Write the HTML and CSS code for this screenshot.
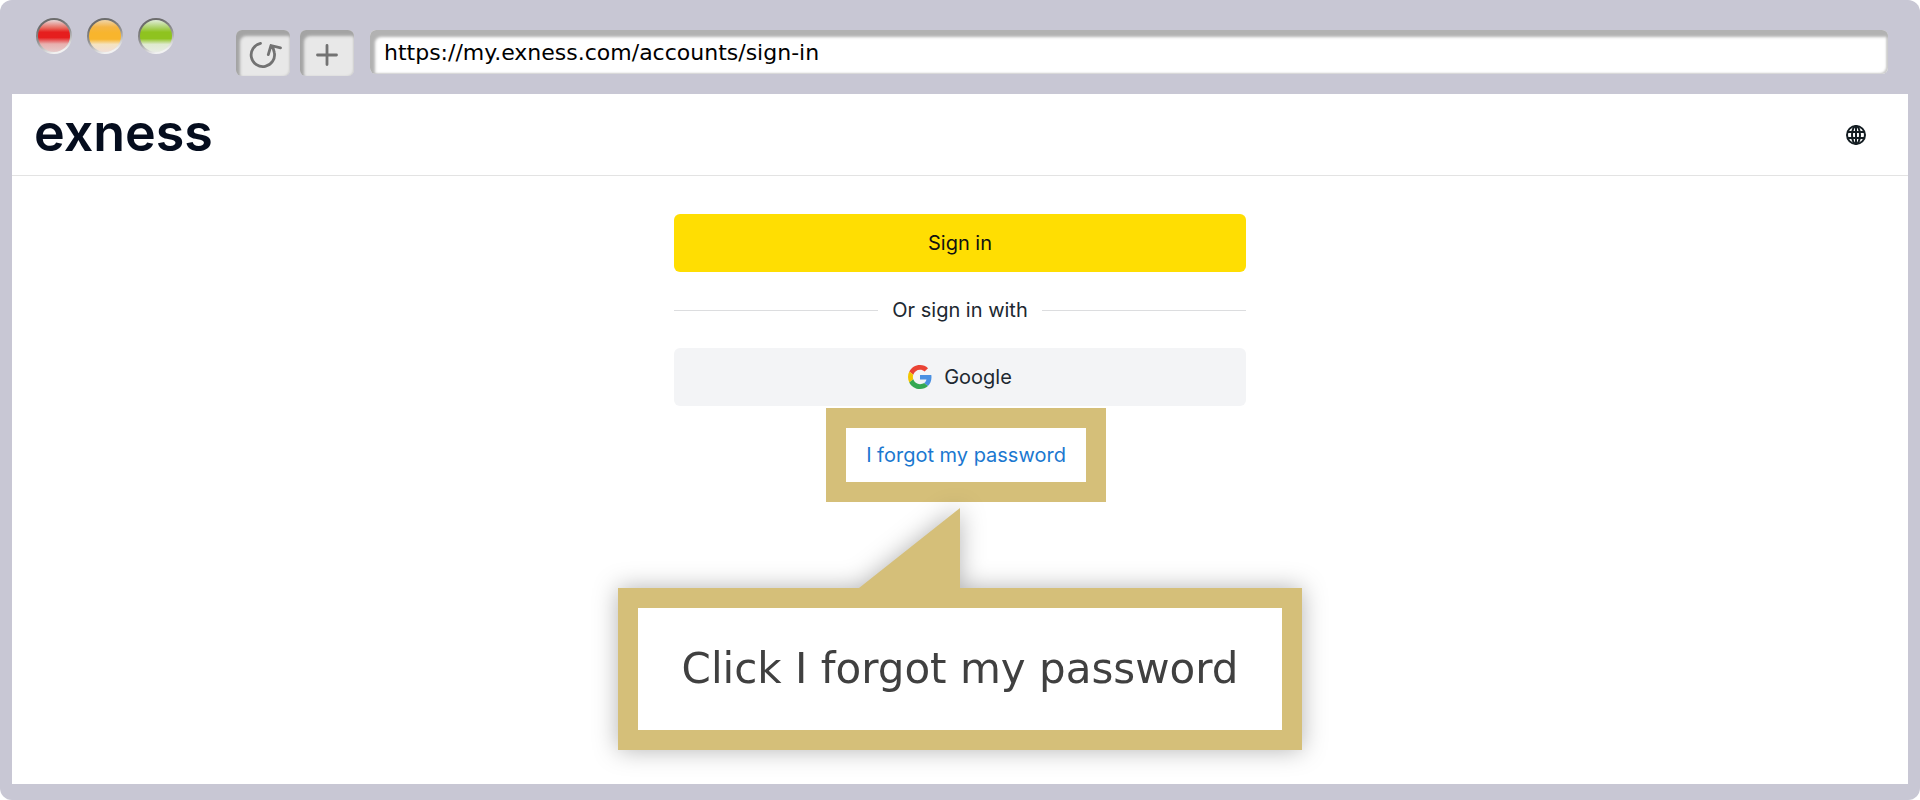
FILE: index.html
```html
<!DOCTYPE html>
<html lang="en">
<head>
  <meta charset="UTF-8">
  <meta name="viewport" content="width=device-width, initial-scale=1.0">
  <title>Exness sign in</title>
  <link rel="stylesheet" href="styles.css">
</head>
<body>
  <div class="browser">
    <div class="toolbar">
      <div class="lights">
        <span class="light red"></span>
        <span class="light orange"></span>
        <span class="light green"></span>
      </div>
      <div class="tools">
        <button class="tool" type="button" aria-label="Reload">
          <svg width="34" height="34" viewBox="0 0 34 34">
            <path d="M14.5 5.4A11.7 11.7 0 1 0 28.3 14.5Q27.8 10 25 7.5M22.3 16.6L25 7.5L34.5 9.8"/>
          </svg>
        </button>
        <button class="tool" type="button" aria-label="New tab">
          <svg width="34" height="34" viewBox="0 0 34 34">
            <path d="M17 7.5V26.5M7.5 17H26.5"/>
          </svg>
        </button>
      </div>
      <input class="address" type="text" aria-label="Address" value="https://my.exness.com/accounts/sign-in">
    </div>

    <div class="page">
      <header class="header">
        <a class="logo" href="#">exness</a>
        <button class="language" type="button" aria-label="Language">
          <svg width="22" height="22" viewBox="0 0 22 22">
            <circle cx="11" cy="11" r="9"/>
            <ellipse cx="11" cy="11" rx="4" ry="9"/>
            <path d="M2.5 8H19.5M2.5 14H19.5M11 2V20"/>
          </svg>
        </button>
      </header>

      <main class="content">
        <form class="signin">
          <button class="btn btn-yellow" type="button">Sign in</button>
          <div class="divider">Or sign in with</div>
          <button class="btn btn-grey" type="button">
            <svg width="24" height="24" viewBox="0 0 48 48">
              <path fill="#EA4335" d="M24 9.5c3.54 0 6.71 1.22 9.21 3.6l6.85-6.85C35.9 2.38 30.47 0 24 0 14.62 0 6.51 5.38 2.56 13.22l7.98 6.19C12.43 13.72 17.74 9.5 24 9.5z"/>
              <path fill="#4A90E2" d="M46.98 24.55c0-1.57-.15-3.09-.38-4.55H24v9.02h12.94c-.58 2.96-2.26 5.48-4.78 7.18l7.73 6c4.51-4.18 7.09-10.36 7.09-17.65z"/>
              <path fill="#F2C500" d="M10.53 28.59c-.48-1.45-.76-2.99-.76-4.59s.27-3.14.76-4.59l-7.98-6.19C.92 16.46 0 20.12 0 24c0 3.88.92 7.54 2.56 10.78l7.97-6.19z"/>
              <path fill="#34A853" d="M24 48c6.48 0 11.93-2.13 15.89-5.81l-7.73-6c-2.15 1.45-4.92 2.3-8.16 2.3-6.26 0-11.57-4.22-13.47-9.91l-7.98 6.19C6.51 42.62 14.62 48 24 48z"/>
            </svg>
            Google
          </button>
        </form>
        <div class="highlight">
          <a class="forgot" href="#">I forgot my password</a>
        </div>
        <div class="callout">
          <svg class="pointer" width="101" height="80" viewBox="0 0 101 80">
            <path d="M101 0V80H0z"/>
          </svg>
          <p class="callout-box">Click I forgot my password</p>
        </div>
      </main>
    </div>
  </div>
</body>
</html>
```
FILE: styles.css
```css
* {
  box-sizing: border-box;
}
body {
  margin: 0;
  background-color: #ffffff;
  font-family: Inter, sans-serif;
}
button, input {
  font: inherit;
  border: none;
}
button {
  padding: 0;
  cursor: pointer;
}

/* browser window */
.browser {
  display: flex;
  flex-direction: column;
  min-height: 100vh;
  padding: 0 12px 16px;
  border-radius: 12px;
  background-color: #c8c7d4;
}
.toolbar {
  display: flex;
  align-items: flex-start;
  height: 94px;
  padding: 18px 20px 0 24px;
}
.lights {
  display: flex;
  gap: 15px;
}
.light {
  display: flex;
  width: 36px;
  height: 36px;
  padding: 2px;
  border-radius: 50%;
  background: linear-gradient(160deg, #6c6c6c 20%, #929292 50%, #f2f2f2 85%);
}
.light::before {
  content: "";
  flex: 1;
  border-radius: 50%;
}
.red::before {
  background: linear-gradient(#e6d0d0 2%, #e8685c 25%, #e61e1e 38%, #e61e1e 55%, #e8b0ae 75%, #e6cccc);
}
.orange::before {
  background: linear-gradient(#f0d2a0 2%, #f5b545 22%, #f8b52d 40%, #f8b52d 60%, #f5e3c0 76%, #f0dfd8);
}
.green::before {
  background: linear-gradient(#dcead0 2%, #a8d060 25%, #8fc31f 38%, #8fc31f 58%, #dfead0 76%, #e8ece4);
}
.tools {
  display: flex;
  gap: 10px;
  margin: 12px 16px 0 62px;
}
.tool {
  display: flex;
  align-items: center;
  justify-content: center;
  width: 54px;
  height: 46px;
  padding-top: 4px;
  border-radius: 6px;
  background-color: #e8e8e8;
  box-shadow: inset 4px 6px 3px #a4a4a4, inset -1px 0 2px #cccccc;
}
.tool svg {
  overflow: visible;
  fill: none;
  stroke: #727272;
  stroke-width: 2.8;
  stroke-linecap: round;
  stroke-linejoin: round;
}
.address {
  flex: 1;
  height: 44px;
  margin-top: 12px;
  padding: 0 14px;
  border-radius: 6px;
  background-color: #ffffff;
  box-shadow: inset 5px 7px 3px #b2b2b2, inset -2px -1px 2px #cccccc;
  font-family: "DejaVu Sans", sans-serif;
  font-size: 22px;
  color: #000000;
}

/* page */
.page {
  flex: 1;
  background-color: #ffffff;
}
.header {
  display: flex;
  align-items: center;
  justify-content: space-between;
  height: 82px;
  padding: 0 41px 0 22px;
  border-bottom: 1px solid #e3e3e3;
}
.logo {
  padding-bottom: 4px;
  font-size: 52px;
  font-weight: 600;
  line-height: 60px;
  color: #050d1e;
  text-decoration: none;
}
.language {
  width: 22px;
  height: 22px;
  background: none;
}
.language svg {
  display: block;
  fill: none;
  stroke: #141d22;
  stroke-width: 2;
}
.content {
  display: flex;
  flex-direction: column;
  align-items: center;
  padding: 38px 0 34px;
}
.signin {
  width: 100%;
  max-width: 572px;
}
.btn {
  display: flex;
  align-items: center;
  justify-content: center;
  gap: 12px;
  width: 100%;
  height: 58px;
  border-radius: 6px;
  font-size: 20px;
}
.btn-yellow {
  background-color: #ffde02;
  color: #111111;
}
.btn-grey {
  background-color: #f3f4f6;
  color: #202830;
}
.divider {
  display: flex;
  align-items: center;
  gap: 14px;
  height: 76px;
  font-size: 20px;
  color: #202830;
}
.divider::before,
.divider::after {
  content: "";
  flex: 1;
  height: 1px;
  background-color: #dcdddf;
}
.highlight {
  display: flex;
  align-items: center;
  justify-content: center;
  width: 280px;
  height: 94px;
  margin: 2px 0 0 12px;
  border: 20px solid #d5bf79;
}
.forgot {
  font-size: 20px;
  color: #1b78d0;
  text-decoration: none;
}

/* callout with pointer */
.callout {
  display: flex;
  flex-direction: column;
  width: 684px;
  margin-top: 6px;
  filter: drop-shadow(0 0 12px rgba(0, 0, 0, 0.3));
}
.pointer {
  align-self: flex-start;
  margin-left: 241px;
  fill: #d5bf79;
}
.callout-box {
  margin: 0;
  padding: 31px 0;
  border: 20px solid #d5bf79;
  background-color: #ffffff;
  font-family: Verdana, "DejaVu Sans", sans-serif;
  font-size: 42px;
  line-height: 60px;
  text-align: center;
  color: #404040;
}
```
